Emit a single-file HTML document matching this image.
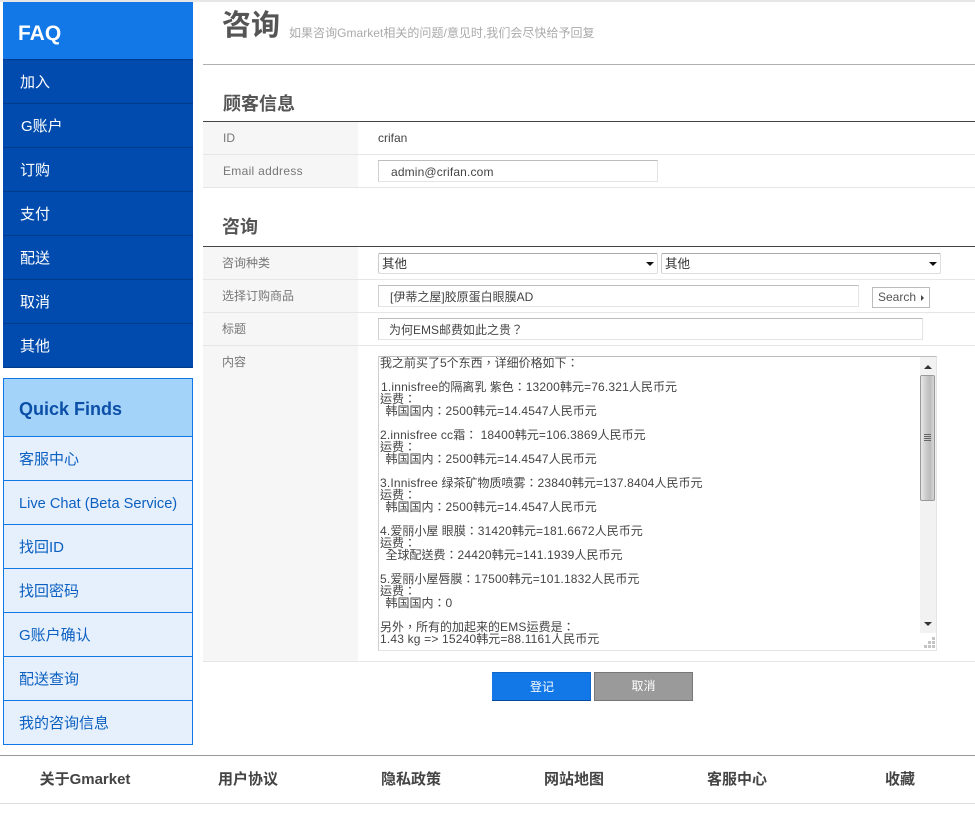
<!DOCTYPE html>
<html lang="zh-CN"><head><meta charset="utf-8"><title>咨询</title>
<style>
html,body{margin:0;padding:0;background:#fff}
body{width:975px;height:817px;position:relative;overflow:hidden;font-family:"Liberation Sans","Noto Sans CJK SC",sans-serif;font-size:12px;color:#444}
div,a{position:absolute;box-sizing:border-box;white-space:nowrap}
.nav{left:3px;width:190px;height:44px;background:#004bad;border-top:1px solid #003a8c;color:#fff;font-size:15px;line-height:45px;padding-left:17px}
.qf{left:3px;width:190px;height:44px;background:#e6f0fd;border:1px solid #1278e8;border-bottom:0;color:#0b5fc0;font-size:15px;line-height:45px;padding-left:15px}
.bg{left:203px;width:155px;background:#f6f6f6}
.hl{left:203px;width:772px;height:1px;background:#e6e6e6}
.lab{left:223px;color:#777;font-size:12px;line-height:14px}
.inp{background:#fff;border:1px solid #e4e4e4;border-top:1px solid #bdbdbd;border-left:1px solid #cfcfcf;font-family:"Liberation Sans","Noto Sans CJK TC",sans-serif;font-size:12px;color:#444;line-height:22px}
.sel{top:253px;height:21px;background:#fff;border:1px solid #ddd;border-top-color:#aaa;border-left-color:#ccc;border-radius:2px;line-height:21px;padding-left:3px;color:#333;font-size:12.5px}
.sel i{position:absolute;right:3px;top:8px;width:0;height:0;border:4px solid transparent;border-top:4px solid #111;border-bottom:0}
.ft{top:771px;font-size:15px;font-weight:bold;color:#444;line-height:18px;text-align:center}
.h2{font-size:18px;font-weight:bold;color:#555;line-height:20px}
#ta{left:378px;top:356px;width:559px;height:295px;background:#fff;border:1px solid #e4e4e4;border-top:1px solid #bdbdbd;border-left:1px solid #cfcfcf;overflow:hidden}
#tx{left:1px;top:0;line-height:12px;font-family:"Liberation Sans","Noto Sans CJK TC",sans-serif;font-size:12px;color:#444;white-space:pre}
#tx u{text-decoration:none;letter-spacing:.18px}
#tx s{text-decoration:none;display:inline-block;width:5.5px}
</style></head><body>
<div style="left:0;top:0;width:975px;height:2px;background:#e6e6e6"></div>

<div style="left:3px;top:2px;width:190px;height:57px;background:#1278e8;color:#fff;font-size:21px;font-weight:bold;line-height:63px;padding-left:15px">FAQ</div>
<div class="nav" style="top:59px">加入</div>
<div class="nav" style="top:103px"><span style="margin-left:1px">G账户</span></div>
<div class="nav" style="top:147px">订购</div>
<div class="nav" style="top:191px">支付</div>
<div class="nav" style="top:235px">配送</div>
<div class="nav" style="top:279px">取消</div>
<div class="nav" style="top:323px;height:45px;border-bottom:1px solid #003a8c">其他</div>

<div style="left:3px;top:378px;width:190px;height:59px;background:#a4d3f9;border:1px solid #1278e8;color:#0b4fa8;font-size:18px;font-weight:bold;line-height:60px;padding-left:15px">Quick Finds</div>
<div class="qf" style="top:436px">客服中心</div>
<div class="qf" style="top:480px;font-size:14.6px;line-height:46px">Live Chat (Beta Service)</div>
<div class="qf" style="top:524px">找回ID</div>
<div class="qf" style="top:568px">找回密码</div>
<div class="qf" style="top:612px">G账户确认</div>
<div class="qf" style="top:656px">配送查询</div>
<div class="qf" style="top:700px;height:45px;border-bottom:1px solid #1278e8">我的咨询信息</div>

<div style="left:222px;top:8px;font-size:29px;font-weight:bold;color:#555;line-height:36px">咨询</div>
<div style="left:289px;top:25px;font-size:12px;color:#aaa;line-height:16px;letter-spacing:.03px">如果咨询Gmarket相关的问题/意见时,我们会尽快给予回复</div>
<div style="left:203px;top:64px;width:772px;height:1px;background:#b0b0b0"></div>

<div class="h2" style="left:223px;top:94px">顾客信息</div>
<div style="left:203px;top:121px;width:772px;height:1px;background:#444"></div>
<div class="bg" style="top:122px;height:65px"></div>
<div class="hl" style="top:154px"></div>
<div class="hl" style="top:187px"></div>
<div class="lab" style="top:131px">ID</div>
<div style="left:378px;top:131px;line-height:14px;color:#444">crifan</div>
<div class="lab" style="top:164px;letter-spacing:.3px">Email address</div>
<div class="inp" style="left:378px;top:160px;width:280px;height:22px;padding-left:12px;letter-spacing:.15px;line-height:23px">admin@crifan.com</div>

<div class="h2" style="left:222px;top:217px">咨询</div>
<div style="left:203px;top:246px;width:772px;height:1px;background:#444"></div>
<div class="bg" style="top:247px;height:414px"></div>
<div class="hl" style="top:279px"></div>
<div class="hl" style="top:312px"></div>
<div class="hl" style="top:345px"></div>
<div class="hl" style="top:661px"></div>
<div class="lab" style="left:222px;top:256px">咨询种类</div>
<div class="lab" style="left:222px;top:289px">选择订购商品</div>
<div class="lab" style="left:222px;top:322px">标题</div>
<div class="lab" style="left:222px;top:355px">内容</div>

<div class="sel" style="left:378px;width:280px">其他<i></i></div>
<div class="sel" style="left:661px;width:280px">其他<i></i></div>
<div class="inp" style="left:378px;top:285px;width:481px;height:22px;padding-left:11px">[伊蒂之屋]胶原蛋白眼膜AD</div>
<div style="left:872px;top:287px;width:58px;height:21px;border:1px solid #bbb;background:#fff;color:#555;line-height:18px;padding-left:5px">Search<i style="position:absolute;left:48px;top:7px;width:0;height:0;border:3px solid transparent;border-left:3px solid #444;border-right:0"></i></div>
<div class="inp" lang="zh-TW" style="left:378px;top:318px;width:545px;height:22px;padding-left:10px">为何EMS邮费如此之贵？</div>

<div id="ta">
<div id="tx" lang="zh-TW">我之前买了5个东西，详细价格如下：

<span style="margin-left:1px"><u>1.innisfree</u>的隔离乳 紫色：<u>13200</u>韩元<u>=76.321</u>人民币元</span>
运费：
<s></s>韩国国内：<u>2500</u>韩元<u>=14.4547</u>人民币元

<u>2.innisfree cc</u>霜： <u>18400</u>韩元<u>=106.3869</u>人民币元
运费：
<s></s>韩国国内：<u>2500</u>韩元<u>=14.4547</u>人民币元

<u>3.Innisfree </u>绿茶矿物质喷雾：<u>23840</u>韩元<u>=137.8404</u>人民币元
运费：
<s></s>韩国国内：<u>2500</u>韩元<u>=14.4547</u>人民币元

<u>4.</u>爱丽小屋 眼膜：<u>31420</u>韩元<u>=181.6672</u>人民币元
运费：
<s></s>全球配送费：<u>24420</u>韩元<u>=141.1939</u>人民币元

<u>5.</u>爱丽小屋唇膜：<u>17500</u>韩元<u>=101.1832</u>人民币元
运费：
<s></s>韩国国内：0

另外，所有的加起来的<u>EMS</u>运费是：
<u>1.43 kg =&gt; 15240</u>韩元<u>=88.1161</u>人民币元</div>
<div style="left:541px;top:0;width:17px;height:276px;background:#f2f2f2">
 <div style="left:4px;top:8px;width:0;height:0;border:4px solid transparent;border-bottom:4px solid #333;border-top:0"></div>
 <div style="left:0;top:18px;width:15px;height:126px;border:1px solid #999;border-radius:2px;background:linear-gradient(90deg,#e8e8e8,#c8c8c8 45%,#bcbcbc 70%,#d8d8d8)"></div>
 <div style="left:4px;top:77px;width:7px;height:8px;background:repeating-linear-gradient(#666 0 1px,transparent 1px 2px)"></div>
 <div style="left:4px;top:265px;width:0;height:0;border:4px solid transparent;border-top:4px solid #333;border-bottom:0"></div>
</div>
<svg style="position:absolute;left:544px;top:279px" width="14" height="14"><g fill="#c4c4c4"><rect x="9" y="1" width="3" height="3"/><rect x="5" y="5" width="3" height="3"/><rect x="9" y="5" width="3" height="3"/><rect x="1" y="9" width="3" height="3"/><rect x="5" y="9" width="3" height="3"/><rect x="9" y="9" width="3" height="3"/></g></svg>
</div>

<div style="left:492px;top:672px;width:99px;height:29px;background:#1278e8;border-top:1px solid #0d65c8;border-right:1px solid #0d65c8;border-bottom:1px solid #0a4a9c;color:#fff;text-align:center;line-height:28px;padding-left:2px">登记</div>
<div style="left:594px;top:672px;width:99px;height:29px;background:#9a9a9a;border:1px solid #777;color:#fff;text-align:center;line-height:27px">取消</div>

<div style="left:0;top:755px;width:975px;height:1px;background:#999"></div>
<div style="left:0;top:803px;width:975px;height:1px;background:#ddd"></div>
<div class="ft" style="left:0;width:170px">关于Gmarket</div>
<div class="ft" style="left:163px;width:170px">用户协议</div>
<div class="ft" style="left:326px;width:170px">隐私政策</div>
<div class="ft" style="left:489px;width:170px">网站地图</div>
<div class="ft" style="left:652px;width:170px">客服中心</div>
<div class="ft" style="left:815px;width:170px">收藏</div>
</body></html>
